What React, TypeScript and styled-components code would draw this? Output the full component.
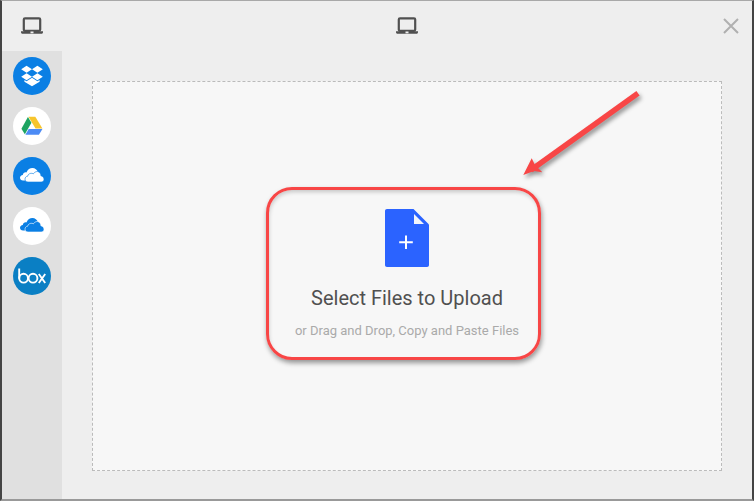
import styled, { createGlobalStyle } from "styled-components";

const GlobalStyle = createGlobalStyle`
    html, body {
        margin: 0;
        padding: 0;
        background: #eeeeee;
    }
`;

const Frame = styled.div`
    box-sizing: border-box;
    width: 754px;
    height: 501px;
    display: flex;
    flex-direction: column;
    background: #eeeeee;
    border-top: 1px solid #a8a8a8;
    border-bottom: 2px solid #999999;
    border-left: 2px solid #444444;
    border-right: 2px solid #444444;
    font-family: Roboto, "Liberation Sans", sans-serif;
`;

const TopBar = styled.div`
    height: 50px;
    flex: none;
    display: grid;
    grid-template-columns: 60px 42px 1fr 42px;
    align-items: center;
    justify-items: center;
`;

const CenterSlot = styled.div`
    grid-column: 3;
    display: flex;
`;

const CloseButton = styled.button`
    grid-column: 4;
    width: 18px;
    height: 18px;
    padding: 0;
    border: none;
    background: none;
    display: flex;
`;

const Body = styled.div`
    flex: 1;
    display: flex;
    min-height: 0;
`;

const Sidebar = styled.nav`
    width: 60px;
    flex: none;
    background: #e0e0e0;
    display: flex;
    flex-direction: column;
    align-items: center;
    gap: 12px;
    padding-top: 6px;
    box-sizing: border-box;
`;

const Source = styled.div<{ $bg: string }>`
    width: 38px;
    height: 38px;
    border-radius: 50%;
    background: ${(p) => p.$bg};
    display: flex;
    align-items: center;
    justify-content: center;
`;

const Main = styled.main`
    flex: 1;
    padding: 30px 30px 28px;
    display: flex;
    min-width: 0;
`;

const DropZone = styled.div`
    position: relative;
    flex: 1;
    background: #f7f7f7;
    border: 1px dashed #bbbbbb;
    display: flex;
    flex-direction: column;
    align-items: center;
    justify-content: center;
    padding-bottom: 4px;
`;

const Title = styled.div`
    margin-top: 19px;
    font-size: 20px;
    line-height: 24px;
    color: #505050;
`;

const Hint = styled.div`
    margin-top: 13px;
    font-size: 13px;
    line-height: 16px;
    color: #aaaaaa;
`;

const Callout = styled.div`
    position: absolute;
    left: 173px;
    top: 105px;
    width: 275px;
    height: 173px;
    box-sizing: border-box;
    border: 3px solid #f84646;
    border-radius: 26px;
    box-shadow: 1px 3px 5px rgba(0, 0, 0, 0.4), inset 1px 3px 4px -1px rgba(0, 0, 0, 0.2);
`;

const Arrow = styled.svg`
    position: absolute;
    left: 420px;
    top: 0;
    filter: drop-shadow(2px 3px 2px rgba(0, 0, 0, 0.4));
`;

const Laptop = () => (
    <svg width="22" height="18" viewBox="0 0 22 18">
        <rect x="2.8" y="1.4" width="16.4" height="12.4" rx="1.2" fill="none" stroke="#505050" strokeWidth="2.2" />
        <path d="M0 14.3H22V15.3C22 16.2 21.4 16.8 20.4 16.8H1.6C0.6 16.8 0 16.2 0 15.3Z" fill="#505050" />
        <rect x="9.5" y="14.5" width="3" height="1.8" fill="#eeeeee" />
    </svg>
);

const CloseIcon = () => (
    <svg width="18" height="18" viewBox="0 0 18 18">
        <path d="M2 2L16 16M16 2L2 16" stroke="#b0b0b0" strokeWidth="2" />
    </svg>
);

const DropboxLogo = () => (
    <svg width="26" height="26" viewBox="0 0 24 24" fill="#ffffff">
        <path d="M7 2.5L12 5.8L7 9L2 5.8Z" />
        <path d="M17 2.5L22 5.8L17 9L12 5.8Z" />
        <path d="M7 9.4L12 12.6L7 15.9L2 12.6Z" />
        <path d="M17 9.4L22 12.6L17 15.9L12 12.6Z" />
        <path d="M12 13.6L17 16.8L19 15.6V17.2L12 21.5L5 17.2V15.6L7 16.8Z" />
    </svg>
);

const DriveLogo = () => (
    <svg width="22" height="20" viewBox="0 0 20 18">
        <path d="M6.8 0.5H13L19.5 11.2H13.2Z" fill="#f7c52d" />
        <path d="M6.3 0.8L9.5 6L3.5 16.6L0.4 11.5Z" fill="#1da462" />
        <path d="M7 11.8H19.5L16.3 16.9H4Z" fill="#4c8bf5" />
    </svg>
);

const OneDriveLogo = ({ color, seam }: { color: string; seam: string }) => (
    <svg width="24" height="16" viewBox="0 1 24 16">
        <path
            d="M5.6 13.6H3C1.2 13.6 0 12.4 0 10.8C0 9.2 1.2 8 2.8 7.9C3.1 6 4.7 5 6.4 5.4C7.6 2.4 10 1 12.4 1C15 1 17.2 2.6 18 5.4C16.4 5.2 15 5.8 14 7C11.6 6 8.4 6.6 7.6 9.4C6.2 9.6 5.2 11.6 5.6 13.6Z"
            fill={color}
        />
        <path
            d="M8 15C6 15 5 13.6 5 12.2C5 10.6 6 9.4 7.6 9.2C8.4 6.6 11 5.6 13.4 6.8C14.6 4.6 17.4 3.8 19.2 5.2C20.4 6.2 20.9 7.4 20.9 8.8C22.6 9.1 24 10.5 24 12.2C24 13.9 22.8 15 21.2 15Z"
            fill={color}
            stroke={seam}
            strokeWidth="0.6"
        />
    </svg>
);

const BoxLogo = () => (
    <svg width="28" height="16" viewBox="0 0 28 16" fill="none" stroke="#ffffff" strokeWidth="1.9">
        <path d="M1.2 0.5V10.5" />
        <circle cx="5.6" cy="10.2" r="4.4" />
        <circle cx="15" cy="10.2" r="4.4" />
        <path d="M20.8 6L27.2 15M27.2 6L20.8 15" />
    </svg>
);

const FileAddIcon = () => (
    <svg width="44" height="58" viewBox="0 0 44 58">
        <path d="M2 0H28.5L44 15.5V56C44 57.2 43.2 58 42 58H2C0.8 58 0 57.2 0 56V2C0 0.8 0.8 0 2 0Z" fill="#2b63ff" />
        <path d="M29 5V15H39Z" fill="#f3f5fb" />
        <path d="M21 26.5V40M14.2 33.3H27.8" stroke="#ffffff" strokeWidth="2" />
    </svg>
);

const sources = [
    { name: "dropbox", bg: "#0a7fe4", logo: <DropboxLogo /> },
    { name: "drive", bg: "#ffffff", logo: <DriveLogo /> },
    { name: "onedrive", bg: "#0a7fe4", logo: <OneDriveLogo color="#ffffff" seam="#0a7fe4" /> },
    { name: "onedrive-business", bg: "#ffffff", logo: <OneDriveLogo color="#0a7fe4" seam="#ffffff" /> },
    { name: "box", bg: "#0a7fc4", logo: <BoxLogo /> },
];

export default function App() {
    return (
        <>
            <GlobalStyle />
            <Frame>
                <TopBar>
                    <Laptop />
                    <CenterSlot>
                        <Laptop />
                    </CenterSlot>
                    <CloseButton aria-label="Close">
                        <CloseIcon />
                    </CloseButton>
                </TopBar>
                <Body>
                    <Sidebar>
                        {sources.map((s) => (
                            <Source key={s.name} $bg={s.bg}>
                                {s.logo}
                            </Source>
                        ))}
                    </Sidebar>
                    <Main>
                        <DropZone>
                            <FileAddIcon />
                            <Title>Select Files to Upload</Title>
                            <Hint>or Drag and Drop, Copy and Paste Files</Hint>
                            <Callout />
                            <Arrow width="130" height="110" viewBox="0 0 130 110">
                                <path d="M125 11.3L18 88" stroke="#f84646" strokeWidth="5.5" />
                                <path d="M10.3 93L18.7 76.3L22 83L29.3 90.3L21 89Z" fill="#f84646" />
                            </Arrow>
                        </DropZone>
                    </Main>
                </Body>
            </Frame>
        </>
    );
}
